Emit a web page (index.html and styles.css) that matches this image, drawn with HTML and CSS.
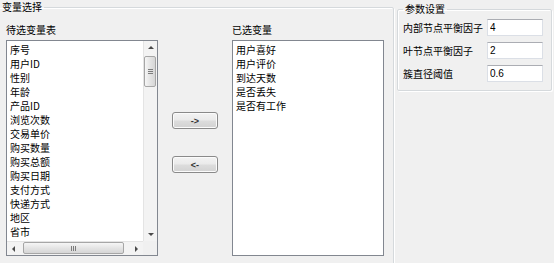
FILE: index.html
```html
<!DOCTYPE html>
<html lang="zh-CN">
<head>
    <meta charset="UTF-8">
    <title>变量选择</title>
    <link rel="stylesheet" href="styles.css">
</head>
<body>

    <div class="dialog">
        <fieldset class="group group-vars">
            <legend>变量选择</legend>
            <div class="var-panel">
                <div class="caption">待选变量表</div>
                <div></div>
                <div class="caption">已选变量</div>

                <div class="listbox with-scroll">
                    <ul class="items">
                        <li>序号</li>
                        <li>用户ID</li>
                        <li>性别</li>
                        <li>年龄</li>
                        <li>产品ID</li>
                        <li>浏览次数</li>
                        <li>交易单价</li>
                        <li>购买数量</li>
                        <li>购买总额</li>
                        <li>购买日期</li>
                        <li>支付方式</li>
                        <li>快递方式</li>
                        <li>地区</li>
                        <li>省市</li>
                    </ul>
                    <div class="vscroll">
                        <span class="arrow up"></span>
                        <span class="thumb"><i class="grip"></i></span>
                        <span class="arrow down"></span>
                    </div>
                    <div class="hscroll">
                        <span class="arrow left"></span>
                        <span class="thumb"><i class="grip"></i></span>
                        <span class="arrow right"></span>
                    </div>
                    <div class="corner"></div>
                </div>

                <div class="move-buttons">
                    <button>-&gt;</button>
                    <button>&lt;-</button>
                </div>

                <div class="listbox">
                    <ul class="items">
                        <li>用户喜好</li>
                        <li>用户评价</li>
                        <li>到达天数</li>
                        <li>是否丢失</li>
                        <li>是否有工作</li>
                    </ul>
                </div>
            </div>
        </fieldset>

        <fieldset class="group group-params">
            <legend>参数设置</legend>
            <div class="param-row">
                <label>内部节点平衡因子</label>
                <input type="text" value="4">
            </div>
            <div class="param-row">
                <label>叶节点平衡因子</label>
                <input type="text" value="2">
            </div>
            <div class="param-row">
                <label>簇直径阈值</label>
                <input type="text" value="0.6">
            </div>
        </fieldset>
    </div>

</body>
</html>
```

FILE: styles.css
```css
* {
    box-sizing: border-box;
}

body {
    margin: 0;
    height: 263px;
    overflow: hidden;
    background: #f0f0f0;
    font-family: "Noto Sans CJK SC", "Liberation Sans", sans-serif;
    font-size: 10px;
    color: #000;
}

.dialog {
    display: flex;
    align-items: flex-start;
    gap: 3px;
}

/* group boxes */
.group {
    margin: 0;
    border: 1px solid #d5d9dc;
    box-shadow: inset 1px 1px 0 #fff, 1px 1px 0 #fff;
    border-radius: 2px;
}

.group legend {
    padding: 0 2px;
    line-height: 14px;
}

.group-vars {
    margin-left: -3px;
    width: 397px;
    padding: 9px 0 12px 8px;
}

.group-vars legend {
    margin-left: -6px;
}

.group-params {
    margin-top: 2px;
    width: 155px;
    padding: 3px 6px 8px 5px;
    display: grid;
    row-gap: 6px;
}

/* variable lists */
.var-panel {
    display: grid;
    grid-template-columns: 152px 74px 152px;
    grid-template-rows: 17px 216px;
}

.caption {
    line-height: 14px;
}

.listbox {
    background: #fff;
    border: 1px solid #828790;
    overflow: hidden;
}

.with-scroll {
    display: grid;
    grid-template-columns: 1fr 14px;
    grid-template-rows: 1fr 14px;
}

.items {
    list-style: none;
    margin: 0;
    padding: 2px 3px;
    line-height: 14px;
    overflow: hidden;
    white-space: nowrap;
}

/* scrollbars */
.vscroll,
.hscroll {
    display: flex;
    background: #f3f3f3;
}

.vscroll {
    flex-direction: column;
    border-left: 1px solid #e4e4e4;
}

.hscroll {
    border-top: 1px solid #e4e4e4;
}

.corner {
    background: #f0f0f0;
}

.arrow {
    flex: 0 0 13px;
    display: flex;
    align-items: center;
    justify-content: center;
}

.arrow::before {
    content: "";
    border: 3px solid transparent;
}

.arrow.up::before {
    border-top: 0;
    border-bottom-color: #4a4a4a;
}

.arrow.down {
    margin-top: auto;
}

.arrow.down::before {
    border-bottom: 0;
    border-top-color: #4a4a4a;
}

.arrow.left::before {
    border-left: 0;
    border-right-color: #4a4a4a;
}

.arrow.right {
    margin-left: auto;
}

.arrow.right::before {
    border-right: 0;
    border-left-color: #4a4a4a;
}

.thumb {
    display: flex;
    align-items: center;
    justify-content: center;
    border: 1px solid #a6a6a6;
    border-radius: 2px;
}

.vscroll .thumb {
    height: 31px;
    margin: 2px 0 0 0;
    width: 12px;
    background: linear-gradient(to right, #f6f6f6, #e4e4e4 50%, #d6d6d6);
}

.hscroll .thumb {
    width: 101px;
    margin-left: 3px;
    height: 12px;
    background: linear-gradient(#f6f6f6, #e4e4e4 50%, #d6d6d6);
}

.grip {
    width: 5px;
    height: 5px;
}

.vscroll .grip {
    background: repeating-linear-gradient(#7c7c7c 0 1px, transparent 1px 2px);
}

.hscroll .grip {
    background: repeating-linear-gradient(to right, #7c7c7c 0 1px, transparent 1px 2px);
}

/* move buttons */
.move-buttons {
    display: flex;
    flex-direction: column;
    align-items: center;
    gap: 27px;
    padding-top: 72px;
}

.move-buttons button {
    width: 46px;
    height: 17px;
    padding: 0;
    font-family: "Liberation Sans", sans-serif;
    font-size: 9px;
    font-weight: bold;
    color: #333;
    border: 1px solid #8a8a8a;
    border-radius: 3px;
    background: linear-gradient(#f3f3f3, #ebebeb 45%, #dcdcdc 55%, #d2d2d2);
    box-shadow: inset 0 0 0 1px #fbfbfb;
}

/* parameters */
.param-row {
    display: grid;
    grid-template-columns: 84px 56px;
    align-items: center;
}

.param-row label {
    line-height: 14px;
}

.param-row input {
    width: 56px;
    height: 17px;
    margin: 0;
    padding: 0 2px;
    font-family: "Liberation Sans", sans-serif;
    font-size: 10px;
    color: #000;
    background: #fff;
    border: 1px solid #dbdfe6;
    border-top-color: #abadb3;
}
```
